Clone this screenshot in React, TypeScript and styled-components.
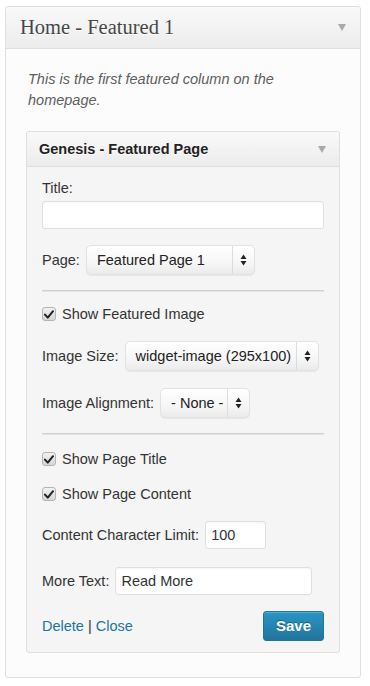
import React from "react";
import styled, { createGlobalStyle } from "styled-components";

const GlobalStyle = createGlobalStyle`
  html, body {
    margin: 0;
    padding: 0;
    background: #ffffff;
  }
  body {
    font-family: "Liberation Sans", Arial, sans-serif;
    font-size: 14.5px;
    color: #333;
  }
`;

const Panel = styled.div`
  margin: 6px 0 0 5px;
  width: 354px;
  border: 1px solid #dfdfdf;
  border-radius: 3px;
  background: #fcfcfc;
`;

const PanelHeader = styled.div`
  height: 41px;
  display: flex;
  align-items: center;
  justify-content: space-between;
  padding: 0 14px 0 14px;
  border-bottom: 1px solid #dfdfdf;
  background: linear-gradient(to bottom, #f9f9f9, #ececec);
  border-radius: 3px 3px 0 0;
`;

const PanelTitle = styled.h3`
  margin: 0;
  font-family: "Liberation Serif", Georgia, serif;
  font-weight: normal;
  font-size: 20.5px;
  color: #464646;
  text-shadow: 0 1px 0 #fff;
`;

const Toggle = styled.span`
  width: 0;
  height: 0;
  border-left: 4px solid transparent;
  border-right: 4px solid transparent;
  border-top: 7px solid #a9a9a9;
`;

const PanelBody = styled.div`
  padding: 20px 20px 24px 20px;
`;

const Description = styled.p`
  margin: 0 0 20px 0;
  padding: 0 2px;
  font-style: italic;
  line-height: 21px;
  color: #5e5e5e;
`;

const Widget = styled.div`
  border: 1px solid #dfdfdf;
  border-radius: 3px;
  background: #f5f5f5;
`;

const WidgetHeader = styled.div`
  height: 34px;
  display: flex;
  align-items: center;
  justify-content: space-between;
  padding: 0 13px 0 12px;
  border-bottom: 1px solid #dfdfdf;
  background: linear-gradient(to bottom, #f9f9f9, #ececec);
  border-radius: 3px 3px 0 0;
`;

const WidgetTitle = styled.h4`
  margin: 0;
  font-size: 14.5px;
  font-weight: bold;
  color: #222;
  text-shadow: 0 1px 0 #fff;
`;

const WidgetBody = styled.div`
  padding: 13px 15px 11px 15px;
`;

const Label = styled.div`
  line-height: 16px;
  color: #333;
  white-space: nowrap;
`;

const Row = styled.div<{ $mt: number }>`
  display: flex;
  align-items: center;
  gap: 6px;
  margin-top: ${(p) => p.$mt}px;
`;

const TextInput = styled.div<{ $w?: number; $mt?: number }>`
  box-sizing: border-box;
  width: ${(p) => (p.$w ? `${p.$w}px` : "100%")};
  height: 28px;
  margin-top: ${(p) => p.$mt || 0}px;
  padding: 0 5px;
  display: flex;
  align-items: center;
  background: #fff;
  border: 1px solid #dfdfdf;
  border-radius: 3px;
  box-shadow: inset 0 1px 2px rgba(0, 0, 0, 0.04);
  color: #333;
`;

const Select = styled.div<{ $w: number }>`
  box-sizing: border-box;
  width: ${(p) => p.$w}px;
  height: 30px;
  display: flex;
  align-items: stretch;
  border: 1px solid #e2e2e2;
  border-radius: 5px;
  background: linear-gradient(to bottom, #ffffff 0%, #f6f6f6 60%, #ebebeb 100%);
  box-shadow: 0 1px 1px rgba(0, 0, 0, 0.06);
`;

const SelectText = styled.span`
  flex: 1;
  display: flex;
  align-items: center;
  padding-left: 10px;
  color: #222;
  white-space: nowrap;
  overflow: hidden;
`;

const SelectArrow = styled.span`
  width: 21px;
  flex: none;
  display: flex;
  align-items: center;
  justify-content: center;
  border-left: 1px solid #dcdcdc;
`;

const Divider = styled.hr<{ $mt: number }>`
  margin: ${(p) => p.$mt}px 0 0 0;
  border: 0;
  border-top: 1px solid #cfcfcf;
  border-bottom: 1px solid #e4e4e4;
  height: 0;
`;

const CheckBox = styled.span`
  box-sizing: border-box;
  width: 14px;
  height: 14px;
  display: flex;
  align-items: center;
  justify-content: center;
  border: 1px solid #b4b4b4;
  border-radius: 3px;
  background: linear-gradient(to bottom, #f2f2f2, #d6d6d6);
`;

const CheckLabel = styled.span`
  line-height: 16px;
  color: #333;
`;

const Footer = styled.div`
  margin-top: 16px;
  display: flex;
  align-items: center;
  justify-content: space-between;
`;

const Links = styled.div`
  color: #333;
`;

const Link = styled.a`
  color: #21759b;
  text-decoration: none;
`;

const SaveButton = styled.button`
  box-sizing: border-box;
  width: 61px;
  height: 30px;
  border: 1px solid #21759b;
  border-radius: 3px;
  background: linear-gradient(to bottom, #2a95c5, #21759b);
  box-shadow: inset 0 1px 0 rgba(120, 200, 230, 0.5);
  color: #fff;
  font-family: "Liberation Sans", Arial, sans-serif;
  font-size: 15px;
  font-weight: bold;
  text-shadow: 0 -1px 0 rgba(0, 0, 0, 0.3);
  padding: 0 0 2px 0;
`;

const UpDown = () => (
  <svg width="7" height="12" viewBox="0 0 7 12">
    <path d="M3.5 0.5 L6.5 5 L0.5 5 Z" fill="#222" />
    <path d="M0.5 7 L6.5 7 L3.5 11.5 Z" fill="#222" />
  </svg>
);

const Check = () => (
  <svg width="10" height="9" viewBox="0 0 10 9">
    <path
      d="M1 4.6 L3.8 7.6 L9 1.2"
      fill="none"
      stroke="#222"
      strokeWidth="2"
      strokeLinecap="round"
      strokeLinejoin="round"
    />
  </svg>
);

const Checked: React.FC<{ label: string; mt: number }> = ({ label, mt }) => (
  <Row $mt={mt}>
    <CheckBox>
      <Check />
    </CheckBox>
    <CheckLabel>{label}</CheckLabel>
  </Row>
);

const Dropdown: React.FC<{ value: string; width: number }> = ({ value, width }) => (
  <Select $w={width}>
    <SelectText>{value}</SelectText>
    <SelectArrow>
      <UpDown />
    </SelectArrow>
  </Select>
);

export default function App() {
  return (
    <>
      <GlobalStyle />
      <Panel>
        <PanelHeader>
          <PanelTitle>Home - Featured 1</PanelTitle>
          <Toggle />
        </PanelHeader>
        <PanelBody>
          <Description>This is the first featured column on the homepage.</Description>
          <Widget>
            <WidgetHeader>
              <WidgetTitle>Genesis - Featured Page</WidgetTitle>
              <Toggle />
            </WidgetHeader>
            <WidgetBody>
              <Label>Title:</Label>
              <TextInput $mt={5} />

              <Row $mt={16}>
                <Label>Page:</Label>
                <Dropdown value="Featured Page 1" width={169} />
              </Row>

              <Divider $mt={15} />

              <Checked label="Show Featured Image" mt={14} />

              <Row $mt={19}>
                <Label>Image Size:</Label>
                <Dropdown value="widget-image (295x100)" width={194} />
              </Row>

              <Row $mt={17}>
                <Label>Image Alignment:</Label>
                <Dropdown value="- None -" width={90} />
              </Row>

              <Divider $mt={15} />

              <Checked label="Show Page Title" mt={16} />
              <Checked label="Show Page Content" mt={19} />

              <Row $mt={19}>
                <Label>Content Character Limit:</Label>
                <TextInput $w={61}>100</TextInput>
              </Row>

              <Row $mt={18}>
                <Label>More Text:</Label>
                <TextInput $w={197}>Read More</TextInput>
              </Row>

              <Footer>
                <Links>
                  <Link href="#">Delete</Link> | <Link href="#">Close</Link>
                </Links>
                <SaveButton>Save</SaveButton>
              </Footer>
            </WidgetBody>
          </Widget>
        </PanelBody>
      </Panel>
    </>
  );
}
